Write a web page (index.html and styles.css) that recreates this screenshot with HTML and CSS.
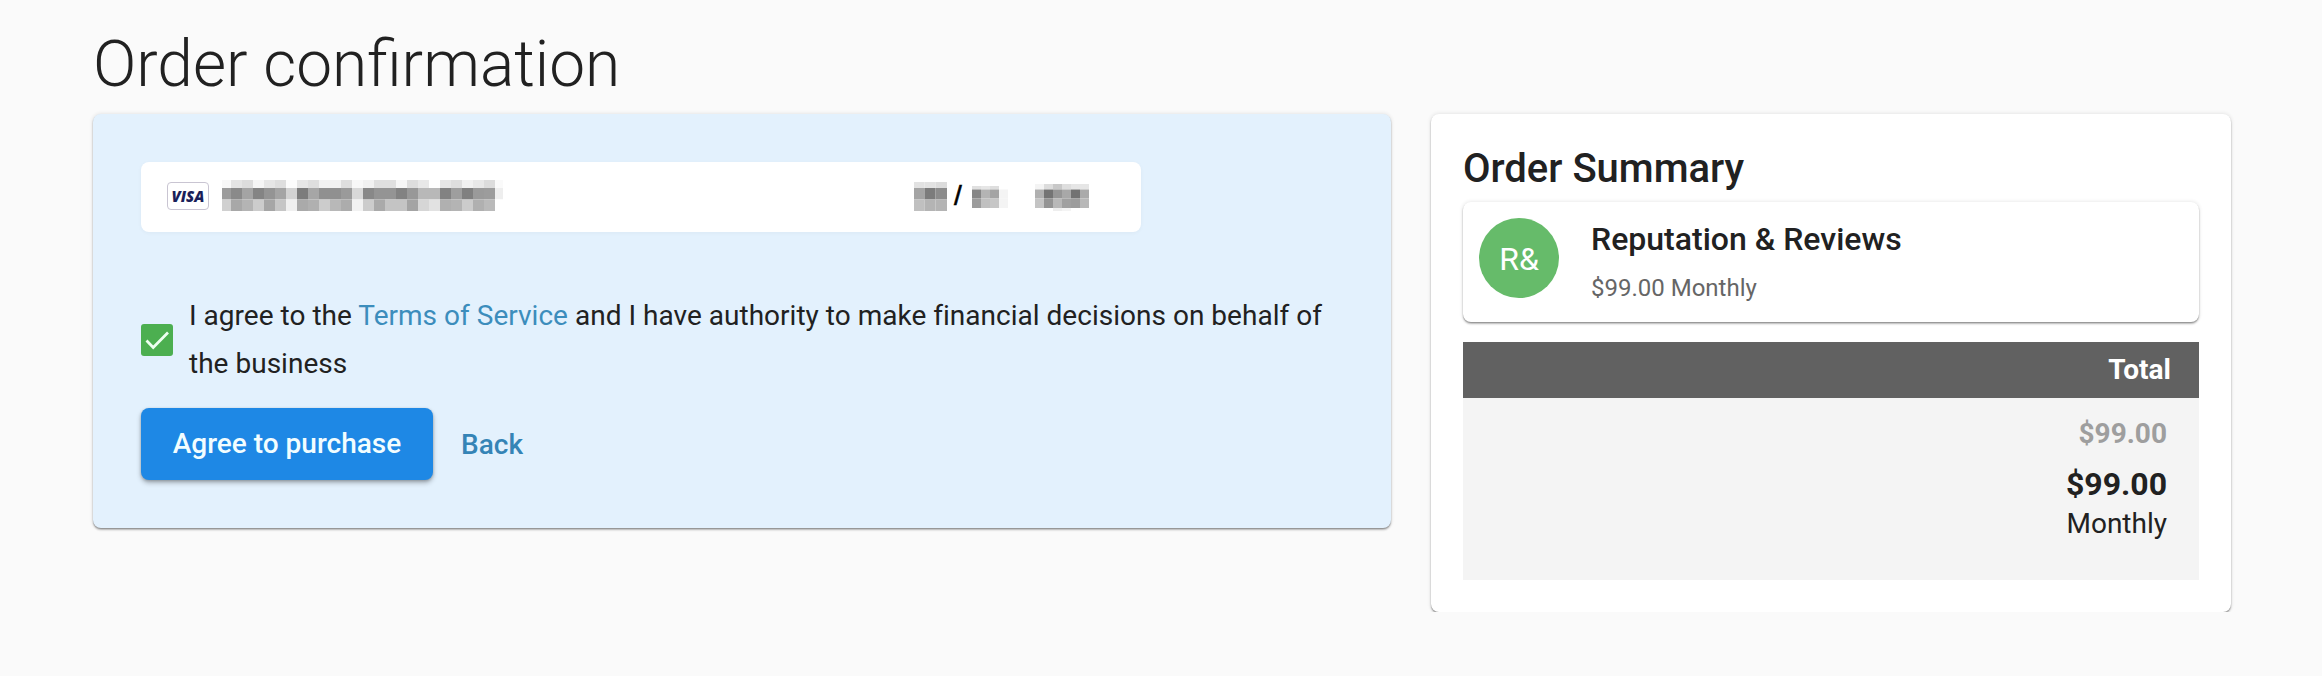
FILE: index.html
```html
<!DOCTYPE html>
<html lang="en">
<head>
<meta charset="utf-8">
<title>Order confirmation</title>
<link rel="stylesheet" href="styles.css">
</head>
<body>
<main class="page">
  <h1 class="page-title">Order confirmation</h1>
  <div class="columns">
    <section class="card payment">
      <div class="card-field">
        <span class="visa">VISA</span>
        <svg class="mask mask-number" width="281" height="31" data-x="0,9,20,31,42,53,64,75,86,97,108,119,130,141,152,163,174,185,196,207,218,229,240,251,262,273,281" data-y="0,8,19.5,31" data-rows="f8 e4 dc f5 e6 de fc e6 de f1 f1 de f8 f1 df df f6 dd e8 fe e6 de f1 e8 dc fa|9c 8a a4 84 94 a4 d2 7c a6 90 90 9a d8 88 94 94 82 98 b8 b8 82 9e 80 9a 9c ee|d0 a8 b4 cc a6 c6 f0 aa b0 cc b8 ac f2 cc aa c4 c4 a4 d6 e2 b0 b4 cc b0 ba ff"></svg>
        <svg class="mask mask-month" width="33" height="29" data-x="0,10.5,21.5,33" data-y="0,6,17.5,29" data-rows="e2 e2 dc|a4 7c 8c|c0 b4 b4"></svg>
        <span class="slash">/</span>
        <svg class="mask mask-year" width="36" height="22" data-x="0,9,18,27,36" data-y="0,3.5,12.5,22" data-rows="e0 e6 de ff|86 b4 a4 f4|9c c0 c6 f4"></svg>
        <svg class="mask mask-cvc" width="54" height="27" data-x="0,9,18,27,36,45,54" data-y="0,5.5,14.5,24,27" data-rows="f4 dc c8 de e6 e6|b0 74 96 a8 72 aa|c4 94 b8 a0 9c b8|ff ff ee f4 ff ff"></svg>
      </div>
      <label class="agreement">
        <svg class="checkbox" width="32" height="32" viewBox="0 0 32 32"><rect width="32" height="32" rx="3" fill="#4caf50"/><path d="M5.500 16.500l6.700 7L27 8.500" fill="none" stroke="#edfff0" stroke-width="2.700"/></svg>
        <span class="agreement-text">I agree to the <a class="link">Terms of Service</a> and I have authority to make financial decisions on behalf of the business</span>
      </label>
      <div class="actions">
        <button class="btn-primary">Agree to purchase</button>
        <a class="btn-back">Back</a>
      </div>
    </section>
    <aside class="card summary">
      <h2 class="summary-title">Order Summary</h2>
      <div class="card item">
        <span class="avatar">R&amp;</span>
        <div class="item-text">
          <div class="item-name">Reputation &amp; Reviews</div>
          <div class="item-price">$99.00 Monthly</div>
        </div>
      </div>
      <div class="total-head">Total</div>
      <div class="total-body">
        <div class="subtotal">$99.00</div>
        <div class="total">$99.00</div>
        <div class="period">Monthly</div>
      </div>
    </aside>
  </div>
</main>
<script src="mask.js"></script>
</body>
</html>
```
FILE: styles.css
```css
* { box-sizing: border-box; }
body {
  margin: 0;
  background: #fafafa;
  color: #212121;
  font-family: Roboto, sans-serif;
  font-size: 28px;
}
.page { padding: 25px 91px 0 93px; }
.page-title {
  margin: 0;
  height: 89px;
  font-size: 64px;
  font-weight: 300;
  line-height: 80px;
}
.columns { display: flex; align-items: flex-start; justify-content: space-between; }
.card {
  border-radius: 8px;
  box-shadow: 0 2px 2px rgba(0, 0, 0, .24), 0 0 4px rgba(0, 0, 0, .12), 0 1px 1px rgba(0, 0, 0, .2);
}
.payment { width: 1298px; height: 414px; padding: 48px; background: #e3f1fd; }
.card-field {
  display: flex;
  align-items: flex-start;
  width: 1000px;
  height: 70px;
  padding-left: 26px;
  border-radius: 8px;
  background: #fff;
  box-shadow: 0 1px 4px rgba(0, 0, 0, .04);
}
.visa {
  width: 42px;
  height: 28px;
  margin-top: 20px;
  border: 1px solid #c9c5d2;
  border-radius: 4px;
  color: #1a1f5a;
  font: italic 800 15px/27px "Open Sans", sans-serif;
  text-align: center;
}
.mask { flex: none; }
.mask-number { margin: 18px 0 0 13px; }
.mask-month { margin: 20px 0 0 411px; }
.slash {
  width: 10px;
  margin: 17px 0 0 7px;
  color: #000;
  font: 28px/34px "Liberation Sans", sans-serif;
  -webkit-text-stroke: .6px #000;
}
.mask-year { margin: 24px 0 0 8px; }
.mask-cvc { margin: 22px 0 0 27px; }
.agreement { display: flex; align-items: center; gap: 16px; margin-top: 60px; }
.checkbox { flex: none; }
.agreement-text { line-height: 48px; letter-spacing: .018px; font-variant-ligatures: common-ligatures; }
.link { color: #3c8dbc; }
.actions { display: flex; align-items: center; gap: 28px; margin-top: 20px; }
.btn-primary {
  width: 292px;
  height: 72px;
  padding: 0;
  border: 0;
  border-radius: 8px;
  background: #1e88e5;
  color: #f2fdff;
  font: 500 28px/72px Roboto, sans-serif;
  box-shadow: 0 3px 5px rgba(0, 0, 0, .26), 0 1px 3px rgba(0, 0, 0, .2);
}
.btn-back { color: #3584b6; font-weight: 500; }
.summary { width: 800px; height: 498px; padding: 32px; background: #fff; }
.summary-title { margin: 0; height: 56px; font-size: 40px; font-weight: 500; line-height: 45px; }
.item { display: flex; height: 120px; padding: 16px; background: #fff; }
.avatar {
  width: 80px;
  height: 80px;
  border-radius: 50%;
  background: #66bb6a;
  color: #fff;
  font-size: 32px;
  line-height: 82px;
  text-align: center;
}
.item-text { margin-left: 32px; }
.item-name { font-size: 32px; font-weight: 500; line-height: 42px; }
.item-price { margin-top: 12px; color: #666; font-size: 24px; line-height: 32px; }
.total-head {
  height: 56px;
  margin-top: 20px;
  padding-right: 28px;
  background: #616161;
  color: #fff;
  font-weight: 700;
  line-height: 56px;
  text-align: right;
}
.total-body { height: 182px; padding: 16px 32px 0 0; background: #f4f4f4; text-align: right; }
.subtotal { color: #9e9e9e; font-weight: 700; line-height: 40px; }
.total { margin-top: 8px; font-size: 32px; font-weight: 700; line-height: 44px; }
.period { line-height: 36px; }
```
FILE: mask.js
```js
// Fills each masked card value with its grid of grey blocks.
document.querySelectorAll(".mask").forEach(function (svg) {
  var xs = svg.dataset.x.split(",").map(Number);
  var ys = svg.dataset.y.split(",").map(Number);
  svg.dataset.rows.split("|").forEach(function (row, r) {
    row.split(" ").forEach(function (tone, c) {
      var rect = document.createElementNS("http://www.w3.org/2000/svg", "rect");
      rect.setAttribute("x", xs[c]);
      rect.setAttribute("y", ys[r]);
      rect.setAttribute("width", xs[c + 1] - xs[c]);
      rect.setAttribute("height", ys[r + 1] - ys[r]);
      rect.setAttribute("fill", "#" + tone + tone + tone);
      svg.appendChild(rect);
    });
  });
});
```
